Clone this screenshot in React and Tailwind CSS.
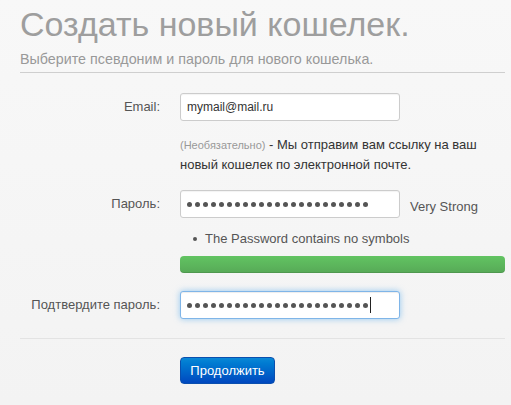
import React from 'react';

const Dots = ({ count }) => (
  <div className="flex items-center gap-[3px]">
    {Array.from({ length: count }).map((_, i) => (
      <span key={i} className="block w-[5px] h-[5px] rounded-full bg-[#555]" />
    ))}
  </div>
);

const Label = ({ children }) => (
  <div className="w-[140px] shrink-0 text-right text-[13px] text-[#555]">{children}</div>
);

const App = () => {
  return (
    <div
      className="w-[511px] h-[405px] overflow-hidden bg-gradient-to-b from-[#f8f8f8] to-[#f3f3f3] pl-5 pr-[6px]"
      style={{ fontFamily: '"Liberation Sans", Arial, sans-serif' }}
    >
      {/* Header */}
      <h1 className="pt-[5px] text-[34px] leading-[38px] text-[#9e9e9e] font-normal">Создать новый кошелек.</h1>
      <p className="mt-[7px] text-[14.3px] leading-[18px] text-[#999]">Выберите псевдоним и пароль для нового кошелька.</p>
      <div className="mt-[4px] h-px bg-[#cfcfcf]" />

      {/* Email */}
      <div className="mt-[20px] flex items-center">
        <Label>Email:</Label>
        <div className="ml-5 w-[220px] h-[28px] flex items-center px-[6px] bg-white border border-[#ccc] rounded-[3px] shadow-[inset_0_1px_1px_rgba(0,0,0,0.05)] text-[12px] text-[#333]">
          mymail@mail.ru
        </div>
      </div>
      <div className="ml-[160px] mt-[14px] text-[13px] leading-[20px] text-[#333]">
        <span className="text-[11px] text-[#999]">(Необязательно)</span> - Мы отправим вам ссылку на ваш
        <br />
        новый кошелек по электронной почте.
      </div>

      {/* Password */}
      <div className="mt-[15px] flex items-center">
        <Label>Пароль:</Label>
        <div className="ml-5 w-[220px] h-[28px] flex items-center px-[6px] bg-white border border-[#ccc] rounded-[3px] shadow-[inset_0_1px_1px_rgba(0,0,0,0.05)]">
          <Dots count={23} />
        </div>
        <span className="ml-[10px] mt-[6px] text-[13px] text-[#555]">Very Strong</span>
      </div>
      <div className="ml-[173px] mt-[11px] flex items-center text-[13px] leading-[20px] text-[#555]">
        <span className="w-[4px] h-[4px] rounded-full bg-[#555] mr-[8px]" />
        The Password contains no symbols
      </div>
      <div className="ml-[160px] mt-[7px] h-[17px] rounded-[4px] bg-gradient-to-b from-[#62c462] to-[#57a957] shadow-[inset_0_-1px_0_rgba(0,0,0,0.1)]" />

      {/* Confirm */}
      <div className="mt-[18px] flex items-center">
        <Label>Подтвердите пароль:</Label>
        <div className="ml-5 w-[220px] h-[28px] flex items-center px-[6px] bg-white border border-[#7fb5e8] rounded-[3px] shadow-[inset_0_1px_1px_rgba(0,0,0,0.075),0_0_6px_rgba(82,168,236,0.6)]">
          <Dots count={23} />
          <span className="ml-[2px] w-px h-[16px] bg-[#222]" />
        </div>
      </div>
      <div className="mt-[19px] h-px bg-[#e3e3e3]" />

      {/* Submit */}
      <div className="ml-[160px] mt-[18px]">
        <button className="w-[95px] h-[27px] rounded-[4px] bg-gradient-to-b from-[#0a88d6] to-[#0047bf] border border-[#0a4fae] text-white text-[13px]">
          Продолжить
        </button>
      </div>
    </div>
  );
};

export default App;
